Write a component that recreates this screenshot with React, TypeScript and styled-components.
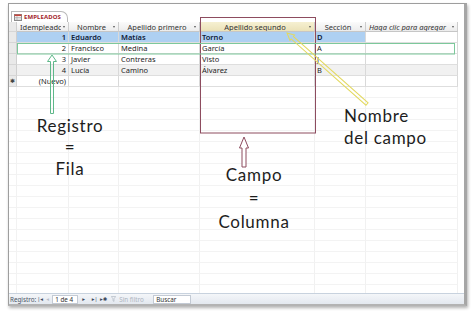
import React from "react";
import styled, { createGlobalStyle, css } from "styled-components";

const Global = createGlobalStyle`
  html, body { margin: 0; padding: 0; background: #fff; }
  body { width: 474px; height: 312px; overflow: hidden; font-family: "Noto Sans", "DejaVu Sans", sans-serif; }
`;

const COLS = "8px 52px 50px 81px 115px 51px 92px";

const Stage = styled.div`
  position: relative;
  width: 474px;
  height: 312px;
  padding: 3px 0 0 8px;
  box-sizing: border-box;
`;

const Window = styled.div`
  width: 459px;
  height: 303px;
  box-sizing: border-box;
  border: 1px solid #9e9e9e;
  border-right: 3px solid #a6a6a6;
  border-bottom: 2px solid #b3b3b3;
  box-shadow: 1px 2px 3px rgba(0, 0, 0, 0.3);
  background: #fff;
  display: flex;
  flex-direction: column;
  overflow: hidden;
`;

const TabStrip = styled.div`
  height: 18px;
  flex: none;
  display: flex;
  align-items: flex-end;
  padding-left: 2px;
  background: #fff;
`;

const Tab = styled.div`
  height: 11px;
  box-sizing: border-box;
  display: flex;
  align-items: center;
  gap: 2px;
  padding: 0 6px 0 2px;
  border: 1px solid #b9b9b9;
  border-bottom: none;
  border-top-right-radius: 7px;
  background: #fff;
`;

const TabText = styled.span`
  font-size: 6px;
  font-weight: 700;
  color: #a3262c;
  letter-spacing: 0.1px;
`;

const Grid = styled.div`
  flex: 1;
  display: flex;
  flex-direction: column;
  overflow: hidden;
`;

const Row = styled.div<{ $h?: number }>`
  display: grid;
  grid-template-columns: ${COLS};
  height: ${(p) => p.$h ?? 11}px;
  flex: none;
`;

const HeadCell = styled.div<{ $hl?: boolean; $italic?: boolean }>`
  box-sizing: border-box;
  display: flex;
  align-items: center;
  padding: 0 3px 0 3px;
  border-right: 1px solid #cdcdcd;
  border-bottom: 1px solid #c6c6c6;
  background: ${(p) =>
    p.$hl ? "linear-gradient(#f6f0d2, #ebe2b8)" : "linear-gradient(#fbfbfb, #ececec)"};
  font-size: 7.5px;
  color: #333;
  font-style: ${(p) => (p.$italic ? "italic" : "normal")};
  white-space: nowrap;
  overflow: hidden;
`;

const HeadLabel = styled.span<{ $align?: string }>`
  flex: 1;
  text-align: ${(p) => p.$align ?? "center"};
  overflow: hidden;
`;

const Caret = styled.span`
  flex: none;
  width: 0;
  height: 0;
  margin-left: 2px;
  border-left: 1.5px solid transparent;
  border-right: 1.5px solid transparent;
  border-top: 2px solid #555;
`;

const Selector = styled.div<{ $empty?: boolean }>`
  box-sizing: border-box;
  background: ${(p) => (p.$empty ? "#fff" : "#e9e9e9")};
  border-right: 1px solid ${(p) => (p.$empty ? "#f2f2f2" : "#cfcfcf")};
  border-bottom: 1px solid ${(p) => (p.$empty ? "#f2f2f2" : "#d6d6d6")};
  font-size: 6px;
  color: #444;
  display: flex;
  align-items: center;
  justify-content: center;
`;

const Cell = styled.div<{ $sel?: boolean; $alt?: boolean; $right?: boolean; $faint?: boolean }>`
  box-sizing: border-box;
  padding: 0 2px;
  font-size: 7.5px;
  line-height: 10px;
  color: #1e1e1e;
  white-space: nowrap;
  overflow: hidden;
  text-align: ${(p) => (p.$right ? "right" : "left")};
  border-right: 1px solid #d9d9d9;
  border-bottom: 1px solid #dedede;
  background: #fff;
  ${(p) =>
    p.$alt &&
    css`
      background: #f1f1f1;
    `}
  ${(p) =>
    p.$sel &&
    css`
      background: #aed0f2;
      font-weight: 600;
      color: #10213a;
    `}
  ${(p) =>
    p.$faint &&
    css`
      border-right-color: #f1f1f1;
      border-bottom-color: #f3f3f3;
    `}
`;

const StatusBar = styled.div`
  height: 11px;
  flex: none;
  box-sizing: border-box;
  border-top: 1px solid #c8d2de;
  background: linear-gradient(#f4f6f9, #e3e8ef);
  display: flex;
  align-items: center;
  padding-left: 1px;
  font-size: 6.3px;
  color: #4a5566;
  white-space: nowrap;
`;

const NavBtn = styled.span<{ $dim?: boolean; $w?: number }>`
  width: ${(p) => p.$w ?? 8}px;
  flex: none;
  display: inline-flex;
  align-items: center;
  justify-content: center;
  font-size: 5.5px;
  color: ${(p) => (p.$dim ? "#b8bec8" : "#3d4a5c")};
`;

const Box = styled.span<{ $w: number; $ml?: number }>`
  width: ${(p) => p.$w}px;
  margin-left: ${(p) => p.$ml ?? 0}px;
  flex: none;
  height: 9px;
  box-sizing: border-box;
  border: 1px solid #c3cad4;
  background: #fff;
  display: inline-flex;
  align-items: center;
  padding-left: 2px;
  color: #333;
  font-size: 6.3px;
`;

const Dim = styled.span`
  color: #aeb5bf;
  display: inline-flex;
  align-items: center;
  gap: 3px;
  width: 40px;
  margin-left: 4px;
  flex: none;
`;

const Overlay = styled.svg`
  position: absolute;
  left: 0;
  top: 0;
  pointer-events: none;
`;

const Label = styled.div<{ $x: number; $y: number; $w: number; $align?: string; $lh: number }>`
  position: absolute;
  left: ${(p) => p.$x}px;
  top: ${(p) => p.$y}px;
  width: ${(p) => p.$w}px;
  text-align: ${(p) => p.$align ?? "center"};
  font-family: Lato, "Open Sans", sans-serif;
  font-size: 17px;
  letter-spacing: 0.7px;
  line-height: ${(p) => p.$lh}px;
  color: #1d1d1d;
`;

const TableIcon = () => (
  <svg width="8" height="7" viewBox="0 0 8 7">
    <rect x="0.5" y="0.5" width="7" height="6" fill="#fff" stroke="#8a8a8a" />
    <rect x="0.5" y="0.5" width="7" height="1.6" fill="#c8453c" />
    <line x1="0.5" y1="3.5" x2="7.5" y2="3.5" stroke="#9a9a9a" strokeWidth="0.6" />
    <line x1="0.5" y1="5" x2="7.5" y2="5" stroke="#9a9a9a" strokeWidth="0.6" />
    <line x1="3" y1="2" x2="3" y2="6.5" stroke="#9a9a9a" strokeWidth="0.6" />
  </svg>
);

const Funnel = () => (
  <svg width="5" height="6" viewBox="0 0 5 6">
    <path d="M0.3 0.5 H4.7 L3 2.8 V5.4 L2 4.8 V2.8 Z" fill="none" stroke="#b3bac4" strokeWidth="0.7" />
  </svg>
);

const data = [
  { id: 1, n: "Eduardo", a1: "Matías", a2: "Torno", s: "D" },
  { id: 2, n: "Francisco", a1: "Medina", a2: "García", s: "A" },
  { id: 3, n: "Javier", a1: "Contreras", a2: "Visto", s: "J" },
  { id: 4, n: "Lucía", a1: "Camino", a2: "Álvarez", s: "B" },
];

const headers: { t: string; align?: string; hl?: boolean; italic?: boolean }[] = [
  { t: "Idempleadc", align: "left" },
  { t: "Nombre" },
  { t: "Apellido primero" },
  { t: "Apellido segundo", hl: true },
  { t: "Sección" },
  { t: "Haga clic para agregar", align: "left", italic: true },
];

export default function App() {
  const filler = Array.from({ length: 20 });
  return (
    <>
      <Global />
      <Stage>
        <Window>
          <TabStrip>
            <Tab>
              <TableIcon />
              <TabText>EMPLEADOS</TabText>
            </Tab>
          </TabStrip>
          <Grid>
            <Row $h={10}>
              <Selector />
              {headers.map((h) => (
                <HeadCell key={h.t} $hl={h.hl} $italic={h.italic}>
                  <HeadLabel $align={h.align}>{h.t}</HeadLabel>
                  <Caret />
                </HeadCell>
              ))}
            </Row>
            {data.map((r, i) => {
              const sel = i === 0;
              const alt = i === 3;
              return (
                <Row key={r.id}>
                  <Selector />
                  <Cell $sel={sel} $alt={alt} $right>
                    {r.id}
                  </Cell>
                  <Cell $sel={sel} $alt={alt}>{r.n}</Cell>
                  <Cell $sel={sel} $alt={alt}>{r.a1}</Cell>
                  <Cell $sel={sel} $alt={alt}>{r.a2}</Cell>
                  <Cell $sel={sel} $alt={alt}>{r.s}</Cell>
                  <Cell $alt={alt} />
                </Row>
              );
            })}
            <Row>
              <Selector>✱</Selector>
              <Cell $right>(Nuevo)</Cell>
              <Cell />
              <Cell />
              <Cell />
              <Cell />
              <Cell />
            </Row>
            {filler.map((_, i) => (
              <Row key={i}>
                <Selector $empty />
                <Cell $faint />
                <Cell $faint />
                <Cell $faint />
                <Cell $faint />
                <Cell $faint />
                <Cell $faint />
              </Row>
            ))}
          </Grid>
          <StatusBar>
            <span>Registro:</span>
            <NavBtn $w={8}>|◂</NavBtn>
            <NavBtn $dim $w={7}>◂</NavBtn>
            <Box $w={26} $ml={1}>1 de 4</Box>
            <NavBtn $w={11}>▸</NavBtn>
            <NavBtn $w={11}>▸|</NavBtn>
            <NavBtn $w={7}>▸✱</NavBtn>
            <Dim>
              <Funnel />
              Sin filtro
            </Dim>
            <Box $w={38} $ml={2}>Buscar</Box>
          </StatusBar>
        </Window>

        <Overlay width="474" height="312" viewBox="0 0 474 312">
          <rect x="200.5" y="17.5" width="115" height="115.5" fill="none" stroke="#8d4c5f" strokeWidth="1" />
          <rect x="17.5" y="43.5" width="437" height="10.5" fill="none" stroke="#7cc89b" strokeWidth="1" />
          <polygon
            points="52,55 47.5,61.5 50.5,61.5 50.5,113.5 53.5,113.5 53.5,61.5 56.5,61.5"
            fill="none"
            stroke="#5fb88a"
            strokeWidth="1"
          />
          <polygon
            points="244,137 239.5,148 242,148 242,167 246,167 246,148 248.5,148"
            fill="#fff"
            stroke="#8d4c5f"
            strokeWidth="1"
          />
          <g transform="translate(287,33) rotate(41.6)">
            <polygon
              points="0,0 7,-3.5 7,-1.6 107,-1.6 107,1.6 7,1.6 7,3.5"
              fill="none"
              stroke="#e3d95f"
              strokeWidth="1"
            />
          </g>
        </Overlay>

        <Label $x={20} $y={114.7} $w={100} $lh={21.5}>
          Registro
          <br />=<br />
          Fila
        </Label>
        <Label $x={204} $y={162.7} $w={100} $lh={23.5}>
          Campo
          <br />=<br />
          Columna
        </Label>
        <Label $x={344} $y={105.4} $w={110} $align="left" $lh={22}>
          Nombre
          <br />
          del campo
        </Label>
      </Stage>
    </>
  );
}
